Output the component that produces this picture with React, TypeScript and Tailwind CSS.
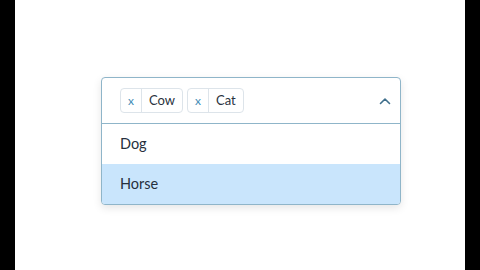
import React from "react";

const font = { fontFamily: "Lato, 'Open Sans', sans-serif" };

function Tag({ label }: { label: string }) {
  return (
    <div className="flex h-[25px] items-stretch rounded-[4px] border border-[#dde4ea] bg-white text-[13px] text-[#2a3340]">
      <div className="flex w-[21px] items-center justify-center border-r border-[#dde4ea] text-[12px] text-[#3f8bb5]">x</div>
      <div className="flex items-center px-[7px]">{label}</div>
    </div>
  );
}

export default function App() {
  return (
    <div className="flex h-[270px] w-[480px] justify-center bg-black" style={font}>
      <div className="h-full w-[450px] bg-white pl-[86px] pt-[77px]">
        <div className="w-[300px] overflow-hidden rounded-[4px] border border-[#8fb5c9] bg-white shadow-[0_3px_8px_rgba(0,0,0,0.10)]">
          <div className="flex h-[46px] items-center justify-between border-b border-[#8fb5c9] pl-[18px] pr-[7px]">
            <div className="flex gap-[4px]">
              <Tag label="Cow" />
              <Tag label="Cat" />
            </div>
            <svg width="12" height="8" viewBox="0 0 12 8" className="mr-[2px]">
              <path d="M1.5 6.5 L6 2 L10.5 6.5" fill="none" stroke="#3f6f8c" strokeWidth="1.6" strokeLinecap="round" strokeLinejoin="round" />
            </svg>
          </div>
          <div className="flex h-[40px] items-center pl-[18px] text-[14.5px] text-[#26303d]">Dog</div>
          <div className="flex h-[40px] items-center bg-[#c9e5fc] pl-[18px] text-[14.5px] text-[#26303d]">Horse</div>
        </div>
      </div>
    </div>
  );
}
